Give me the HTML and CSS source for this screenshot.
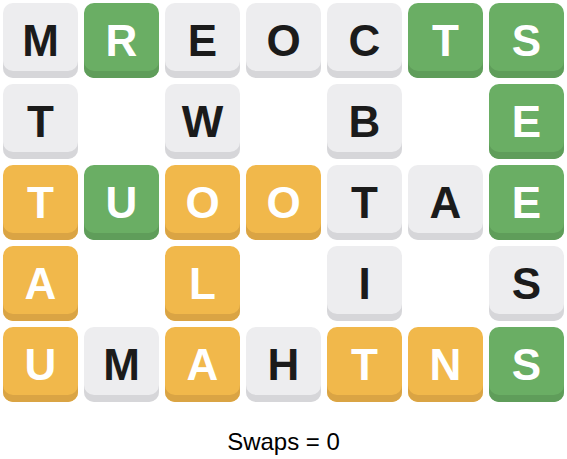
FILE: index.html
```html
<!DOCTYPE html>
<html>
<head>
<meta charset="utf-8">
<link rel="stylesheet" href="styles.css">
</head>
<body>
<div class="board">
  <div class="tile gray">M</div><div class="tile green">R</div><div class="tile gray">E</div><div class="tile gray">O</div><div class="tile gray">C</div><div class="tile green">T</div><div class="tile green">S</div>
  <div class="tile gray">T</div><div class="cell"></div><div class="tile gray">W</div><div class="cell"></div><div class="tile gray">B</div><div class="cell"></div><div class="tile green">E</div>
  <div class="tile orange">T</div><div class="tile green">U</div><div class="tile orange">O</div><div class="tile orange">O</div><div class="tile gray">T</div><div class="tile gray">A</div><div class="tile green">E</div>
  <div class="tile orange">A</div><div class="cell"></div><div class="tile orange">L</div><div class="cell"></div><div class="tile gray">I</div><div class="cell"></div><div class="tile gray">S</div>
  <div class="tile orange">U</div><div class="tile gray">M</div><div class="tile orange">A</div><div class="tile gray">H</div><div class="tile orange">T</div><div class="tile orange">N</div><div class="tile green">S</div>
</div>
<div class="swaps">Swaps = 0</div>
</body>
</html>
```
FILE: styles.css
```css
html, body {
  margin: 0;
  padding: 0;
  background: #ffffff;
}
body {
  font-family: "Liberation Sans", Arial, sans-serif;
}
.board {
  display: grid;
  grid-template-columns: repeat(7, 75px);
  grid-auto-rows: 75px;
  gap: 6px;
  padding: 3px;
}
.tile {
  box-sizing: border-box;
  border-radius: 10px;
  display: flex;
  align-items: center;
  justify-content: center;
  font-size: 44px;
  font-weight: bold;
  line-height: 1;
}
.gray {
  background: #ededef;
  color: #1b1b1b;
  box-shadow: inset 0 -7px 0 #d6d6d9;
}
.green {
  background: #6aae64;
  color: #ffffff;
  box-shadow: inset 0 -7px 0 #5f9d5a;
}
.orange {
  background: #f1b84b;
  color: #ffffff;
  box-shadow: inset 0 -7px 0 #daa444;
}
.swaps {
  margin-top: 23px;
  text-align: center;
  font-size: 24px;
  color: #000000;
}
```
